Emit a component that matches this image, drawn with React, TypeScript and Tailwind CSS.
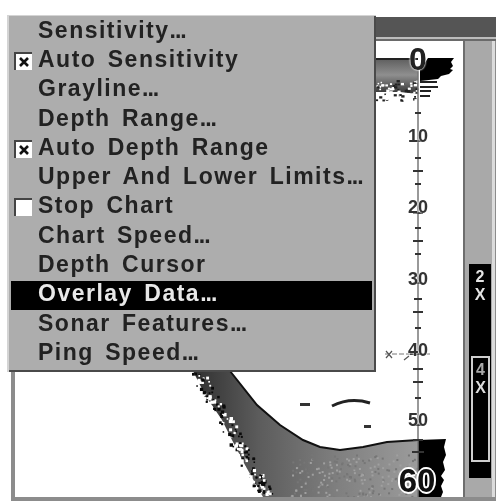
const MENU_ITEMS: { label: string; check?: 'on' | 'off'; active?: boolean; more?: boolean }[] = [
  { label: 'Sensitivity', more: true },
  { label: 'Auto Sensitivity', check: 'on' },
  { label: 'Grayline', more: true },
  { label: 'Depth Range', more: true },
  { label: 'Auto Depth Range', check: 'on' },
  { label: 'Upper And Lower Limits', more: true },
  { label: 'Stop Chart', check: 'off' },
  { label: 'Chart Speed', more: true },
  { label: 'Depth Cursor' },
  { label: 'Overlay Data', active: true, more: true },
  { label: 'Sonar Features', more: true },
  { label: 'Ping Speed', more: true },
]

// y is relative to the chart's top edge
const SCALE_LABELS = [
  { text: '10', y: 86 },
  { text: '20', y: 157 },
  { text: '30', y: 229 },
  { text: '40', y: 300 },
  { text: '50', y: 370 },
]

const TICKS: [number, number][] = [
  [113, 3], [141, 5], [158, 3], [171, 5], [184, 3], [213, 5], [228, 3], [241, 5], [254, 3],
  [283, 5], [299, 4], [312, 5], [328, 3], [354, 8], [369, 5], [382, 5], [398, 3], [425, 4], [440, 5], [452, 6],
]

// small seeded generator so the speckle is stable between renders
function speckle(seed: number, count: number) {
  let s = seed
  const next = () => {
    s = (s * 16807) % 2147483647
    return s / 2147483647
  }
  return Array.from({ length: count }, () => [next(), next(), next()])
}

// left edge of the bottom echo, as x at depth y
const edgeX = (y: number) => 193 + (y - 371) * 0.56

function Chart() {
  return (
    <svg className="absolute inset-0 w-full h-full" viewBox="15 41 448 456">
      <defs>
        <linearGradient id="bed" x1="190" y1="0" x2="420" y2="0" gradientUnits="userSpaceOnUse">
          <stop offset="0" stopColor="#2e2e2e" />
          <stop offset="0.3" stopColor="#5c5c5c" />
          <stop offset="0.65" stopColor="#808080" />
          <stop offset="1" stopColor="#9c9c9c" />
        </linearGradient>
        <linearGradient id="surf" x1="0" y1="58" x2="0" y2="92" gradientUnits="userSpaceOnUse">
          <stop offset="0" stopColor="#5c5c5c" />
          <stop offset="0.5" stopColor="#8f8f8f" />
          <stop offset="1" stopColor="#3c3c3c" />
        </linearGradient>
      </defs>

      {/* surface clutter */}
      <path d="M376 60 L410 60 L418 70 L418 94 L400 92 L376 92 Z" fill="url(#surf)" />
      <rect x="376" y="58" width="42" height="2" fill="#222" />
      {speckle(7, 80).map(([a, b, c], i) => (
        <rect key={i} x={376 + a * 42} y={80 + b * 21} width={1.5 + c * 2} height={1.5 + c} fill={i % 3 ? '#fff' : '#222'} />
      ))}
      <path d="M428 58 L454 58 L451 62 L453 66 L450 69 L453 70 L449 74 L441 76 L438 79 L420 81 L420 70 Z" fill="#000" />
      <path d="M420 82 H437 M420 87 H438 M420 91 H431 M420 96 H430" stroke="#222" strokeWidth="2" />

      {/* bottom echo */}
      <path
        d="M193 371 L230 371 L257 405 L280 425 L303 440 L320 447 L340 450 L363 447 L387 442 L418 440 L418 497 L263 497 L245 465 L232 440 L222 420 L205 395 Z"
        fill="url(#bed)"
      />
      <path
        d="M230 371 L257 405 L280 425 L303 440 L320 447 L340 450 L363 447 L387 442 L418 440"
        fill="none"
        stroke="#111"
        strokeWidth="2"
      />
      {speckle(31, 170).map(([a, b, c], i) => {
        const y = 372 + a * 124
        return (
          <rect
            key={i}
            x={edgeX(y) - 5 + b * 17}
            y={y}
            width={1.5 + c * 2}
            height={1.5 + c * 2}
            fill={i % 2 ? '#0a0a0a' : '#fff'}
          />
        )
      })}
      {speckle(53, 220).map(([a, b, c], i) => (
        <rect key={i} x={290 + a * 128} y={454 + b * 43} width="2" height="2" fill={c > 0.5 ? '#a0a0a0' : '#767676'} />
      ))}
      <path
        d="M418 440 L446 439 L444 447 L446 455 L443 462 L445 470 L441 476 L444 480 L441 486 L443 492 L441 497 L418 497 Z"
        fill="#000"
      />

      {/* fish arches */}
      <path d="M332 406 Q350 397 370 403" fill="none" stroke="#222" strokeWidth="3" />
      <rect x="300" y="403" width="10" height="3" fill="#333" />
      <rect x="364" y="425" width="7" height="3" fill="#333" />

      {/* depth cursor */}
      <path d="M385 354 H430" stroke="#777" strokeWidth="1" strokeDasharray="5 2" />
      <path d="M386 351 L392 358 M392 351 L386 358 M404 360 L409 356" stroke="#555" strokeWidth="1.2" />

      {/* depth ruler */}
      <path d="M418 70 V497" stroke="#777" strokeWidth="1.5" />
      {TICKS.map(([y, w]) => (
        <rect key={y} x={418 - w} y={y - 1} width={w * 2} height="2" fill="#333" />
      ))}
    </svg>
  )
}

function Check({ on }: { on: boolean }) {
  return (
    <span className="w-[18px] h-[18px] shrink-0 bg-white border-t-2 border-l-2 border-[#444] flex items-center justify-center">
      {on && (
        <svg width="12" height="12" viewBox="0 0 12 12">
          <path d="M2 2 L10 10 M10 2 L2 10" stroke="#111" strokeWidth="2.6" />
        </svg>
      )}
    </span>
  )
}

function Menu() {
  return (
    <div className="absolute left-[7px] top-[15px] w-[369px] h-[357px] bg-[#adadad] border-l-2 border-t border-[#d4d4d4] pt-[1px]">
      <div className="absolute right-0 top-0 bottom-0 w-[2px] bg-[#4a4a4a]" />
      <div className="absolute left-0 right-0 bottom-0 h-[2px] bg-[#4a4a4a]" />
      {MENU_ITEMS.map(item => (
        <div
          key={item.label}
          className={`h-[29.3px] flex items-center pl-[6px] mr-[4px] ${item.active ? 'bg-black text-[#e8e8e8] ml-[2px]' : 'text-[#222222]'}`}
        >
          <span className="w-[20px] shrink-0 -ml-[1px]">
            {item.check && <Check on={item.check === 'on'} />}
          </span>
          <span className={`font-bold text-[23px] tracking-[1.5px] [word-spacing:3.5px] whitespace-nowrap leading-none -mt-[3px] ${item.active ? '-ml-[2px]' : ''} pl-[4px]`}>
            {item.label}
            {item.more && <span className="tracking-[-1px]">...</span>}
          </span>
        </div>
      ))}
    </div>
  )
}

export default function App() {
  return (
    <div className="relative w-[498px] h-[501px] bg-white overflow-hidden blur-[0.5px] font-['Liberation_Sans',Arial,sans-serif]">
      <div className="absolute left-[11px] top-[17px] w-[485px] h-[484px] flex flex-col bg-[#8c8c8c]">
        <div className="h-[20px] shrink-0 bg-[#555555]" />
        <div className="h-[2px] shrink-0 bg-[#bcbcbc]" />
        <div className="h-[2px] shrink-0 bg-[#6a6a6a]" />
        <div className="flex-1 flex min-h-0 pl-[4px] pb-[4px]">
          <div className="relative w-[448px] shrink-0 bg-white">
            <Chart />
            <span className="absolute left-[383px] top-[2px] w-[40px] text-center font-bold text-[32px] leading-none text-[#222] [text-shadow:0_0_2px_#fff,0_0_2px_#fff]">0</span>
            {SCALE_LABELS.map(l => (
              <span
                key={l.text}
                style={{ top: l.y }}
                className="absolute left-[383px] w-[40px] text-center font-bold text-[18px] leading-none text-[#333] [text-shadow:0_0_2px_#fff,0_0_2px_#fff]"
              >
                {l.text}
              </span>
            ))}
            <span className="absolute left-[372px] top-[423px] w-[60px] text-center font-bold text-[33px] leading-none text-[#111] [text-shadow:2px_0_0_#fff,-2px_0_0_#fff,0_2px_0_#fff,0_-2px_0_#fff]">60</span>
          </div>
          <div className="w-[2px] shrink-0 bg-[#6e6e6e]" />
          <div className="flex-1 flex bg-[#a9a9a9] mr-[1px]">
            <div className="w-[27px] shrink-0 pl-[4px] pt-[223px]">
              <div className="relative w-[22px] h-[214px] bg-black flex flex-col items-center gap-[2px] pt-[5px] font-bold text-[16px] leading-none text-[#e4e4e4]">
                <span>2</span>
                <span>X</span>
                <div className="absolute left-[2px] right-[1px] top-[92px] h-[106px] border-2 border-[#cfcfcf] flex flex-col items-center gap-[2px] pt-[4px] text-[#a8a8a8]">
                  <span>4</span>
                  <span className="text-[#dcdcdc]">X</span>
                </div>
              </div>
            </div>
            <div className="w-[3px] bg-[#dcdcdc]" />
          </div>
        </div>
      </div>
      <Menu />
    </div>
  )
}
